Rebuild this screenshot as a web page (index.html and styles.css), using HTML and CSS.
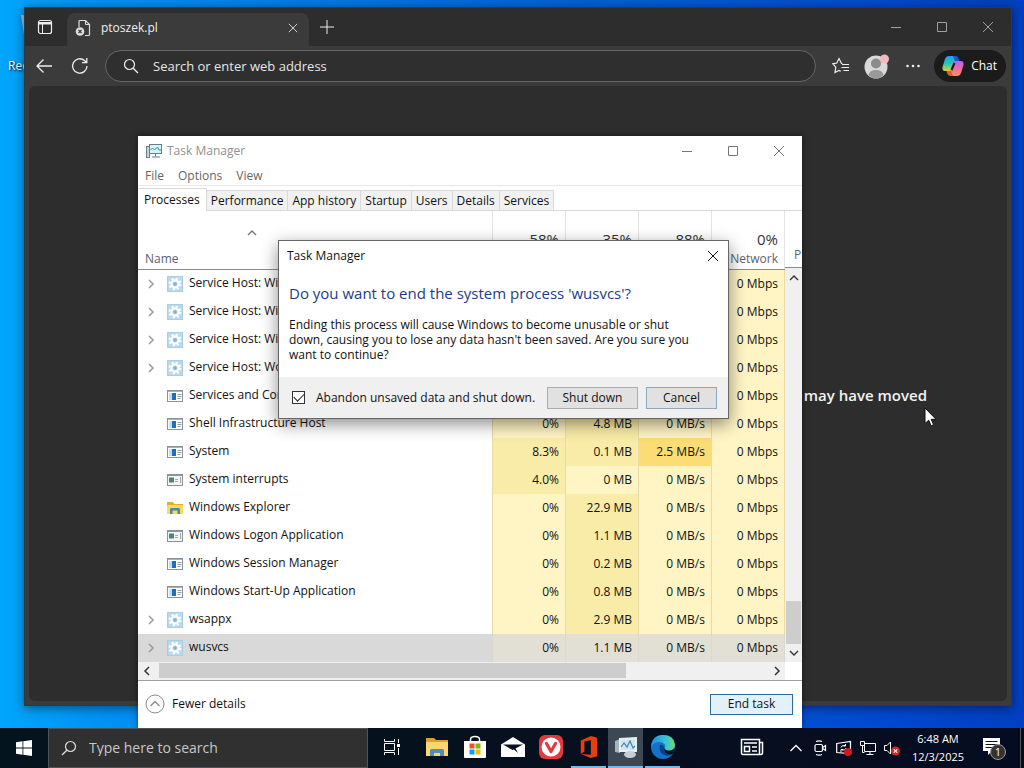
FILE: index.html
```html
<!DOCTYPE html>
<html lang="en">
<head>
<meta charset="utf-8">
<title>Desktop</title>
<link rel="stylesheet" href="styles.css">
</head>
<body>
<svg class="sprite" aria-hidden="true">
  <symbol id="gear" viewBox="0 0 16 16"><rect width="16" height="16" fill="#a9cde3"/><rect x="1" y="1" width="14" height="14" fill="#b9d9ec"/><circle cx="8" cy="8" r="3.6" fill="none" stroke="#fff" stroke-width="2.2"/><circle cx="8" cy="8" r="5.4" fill="none" stroke="#fff" stroke-width="2" stroke-dasharray="2.1 2.14"/><circle cx="8" cy="8" r="1.8" fill="#7fb2d2"/></symbol>
  <symbol id="app" viewBox="0 0 16 16"><rect x=".5" y="2.5" width="15" height="11" fill="#fff" stroke="#8a9299"/><path d="M1 3.5h14" stroke="#a9b2b9"/><rect x="5" y="5" width="4" height="7" fill="#1a6fc0"/><rect x="2" y="5" width="3" height="7" fill="#c7dff3"/><path d="M10.500 6.500h4M10.500 8.500h4M10.500 10.500h3" stroke="#8b98a5"/></symbol>
  <symbol id="appgray" viewBox="0 0 16 16"><rect x=".5" y="2.500" width="15" height="11" fill="#f4f6f6" stroke="#8a9299"/><path d="M1 3.500h14" stroke="#8f989c"/><rect x="2" y="5.500" width="5" height="5" fill="#4f8379"/><path d="M8 7.500h3M8 9.500h3M13.500 5v6" stroke="#a2aaad"/></symbol>
  <symbol id="folder" viewBox="0 0 16 16"><path d="M0 2h6l1.500 2H16v10H0z" fill="#e3ae2c"/><path d="M0 5h16v9H0z" fill="#fbd765"/><path d="M3 14V9.500Q3 8 4.500 8h7Q13 8 13 9.500V14h-2.500v-3.500h-5V14z" fill="#3f8fae"/></symbol>
  <symbol id="tm" viewBox="0 0 16 16"><rect x=".5" y="3.500" width="3" height="11" fill="#c7d3d9" stroke="#6f838d"/><rect x="3.500" y="1.500" width="12" height="9" fill="#d9f1f7" stroke="#64808d"/><path d="M4.500 7l2-2 2 2 3-3 1.500 3h2" fill="none" stroke="#2297b9"/><path d="M9.500 11v2.500M6 14h8" stroke="#64808d"/></symbol>
  <symbol id="close" viewBox="0 0 12 12"><path d="M1 1l10 10M11 1L1 11" fill="none" stroke="currentColor"/></symbol>
  <symbol id="max" viewBox="0 0 12 12"><path d="M1.500 1.500h9v9h-9z" fill="none" stroke="currentColor"/></symbol>
  <symbol id="min" viewBox="0 0 12 12"><path d="M1 6.500h10" stroke="currentColor"/></symbol>
  <symbol id="chev" viewBox="0 0 12 12"><path d="M4 2l4 4-4 4" fill="none" stroke="currentColor" stroke-width="1.500"/></symbol>
  <symbol id="up" viewBox="0 0 12 12"><path d="M2 8l4-4 4 4" fill="none" stroke="currentColor" stroke-width="1.400"/></symbol>
  <symbol id="glass" viewBox="0 0 16 16"><circle cx="6.500" cy="6.500" r="5" fill="none" stroke="currentColor" stroke-width="1.200"/><path d="M10.200 10.200L15 15" stroke="currentColor" stroke-width="1.300"/></symbol>
</svg>

<div class="screen">
  <main class="desktop">
    <div class="bin">
      <svg viewBox="0 0 40 44"><path d="M3 3l34 3-6 36H9z" fill="#a9c6d6"/><path d="M7 7l10 2v28l-6 1z" fill="#7fa3b8"/></svg>
      <span>Rec</span>
    </div>

    <section class="edge">
      <header class="tabbar">
        <button class="ico workspaces" aria-label="Workspaces"><svg viewBox="0 0 16 16"><rect x="1.500" y="1.500" width="13" height="13" rx="2" fill="none" stroke="currentColor" stroke-width="1.200"/><path d="M2 3h12v2.500H2z" fill="currentColor"/><path d="M5.500 5v9" stroke="currentColor"/></svg></button>
        <div class="tab">
          <svg class="fav" viewBox="0 0 16 18"><path d="M4 8V2.500Q4 1.500 5 1.500h5.500L14.500 5.500v10q0 1-1 1H10" fill="none" stroke="#ddd" stroke-width="1.200"/><path d="M10.500 1.500v4h4" fill="none" stroke="#ddd"/><circle cx="5" cy="12.500" r="4.300" fill="#ddd"/><path d="M3.500 11l3 3m0-3l-3 3" stroke="#3b3b3b" stroke-width="1.200"/></svg>
          <span>ptoszek.pl</span>
          <button class="ico small" aria-label="Close tab"><svg viewBox="0 0 12 12"><use href="#close"/></svg></button>
        </div>
        <button class="ico plus" aria-label="New tab"><svg viewBox="0 0 16 16"><path d="M8 1v14M1 8h14" stroke="currentColor"/></svg></button>
        <div class="winbtns">
          <button aria-label="Minimize"><svg viewBox="0 0 12 12"><use href="#min"/></svg></button>
          <button aria-label="Maximize"><svg viewBox="0 0 12 12"><use href="#max"/></svg></button>
          <button aria-label="Close"><svg viewBox="0 0 12 12"><use href="#close"/></svg></button>
        </div>
      </header>
      <div class="toolbar">
        <button class="ico" aria-label="Back"><svg viewBox="0 0 18 18"><path d="M17 9H2M8.500 2.500L2 9l6.500 6.500" fill="none" stroke="currentColor" stroke-width="1.300"/></svg></button>
        <button class="ico" aria-label="Refresh"><svg viewBox="0 0 18 18"><path d="M16 9a7.200 7.200 0 1 1-2.500-5.500L15.500 5.500M15.800 1v4.700H11" fill="none" stroke="currentColor" stroke-width="1.300"/></svg></button>
        <div class="address">
          <svg viewBox="0 0 16 16"><use href="#glass"/></svg>
          <input type="text" aria-label="Address" placeholder="Search or enter web address">
        </div>
        <button class="ico" aria-label="Favorites"><svg viewBox="0 0 18 18"><path d="M10.500 6.500H9.500L7 1.500 4.800 6 .8 6.800l3 3.400-.8 5.300 4-2 1.800.8M10 7.500h7M9.500 10.500H17M11.500 13.500H17" fill="none" stroke="currentColor" stroke-width="1.200"/></svg></button>
        <button class="ico avatar" aria-label="Profile"><svg viewBox="0 0 26 26"><circle cx="12" cy="14" r="11.500" fill="#d9d9d9"/><circle cx="12" cy="10.500" r="5" fill="#8c8c8c"/><path d="M4.500 22.500Q5 17 12 17t7.500 5.500Q16 25.500 12 25.500T4.500 22.500" fill="#9a9a9a"/><circle cx="20.500" cy="6" r="4.500" fill="#f5b8bd"/></svg></button>
        <button class="ico dots" aria-label="More"><svg viewBox="0 0 18 18"><g fill="currentColor"><circle cx="3.500" cy="9" r="1.300"/><circle cx="9" cy="9" r="1.300"/><circle cx="14.500" cy="9" r="1.300"/></g></svg></button>
        <button class="chat">
          <svg viewBox="0 0 24 24">
            <defs>
              <linearGradient id="ga" x2="0" y2="1"><stop stop-color="#1fa0f5"/><stop offset=".5" stop-color="#27c5b0"/><stop offset="1" stop-color="#d8d33b"/></linearGradient>
              <linearGradient id="gb" x2="0" y2="1"><stop stop-color="#b264f0"/><stop offset=".5" stop-color="#f06aa8"/><stop offset="1" stop-color="#ff9352"/></linearGradient>
            </defs>
            <path d="M8 2h6q2 0 1.500 2L12.500 14q-.8 3-3.500 3H4Q1 17 1.500 13L4 5q1-3 4-3z" fill="url(#ga)"/>
            <path d="M12 2h3q2 0 3 3l.5 2H14z" fill="#1b55d0"/>
            <path d="M16 22h-6q-2 0-1.500-2l3-10q.8-3 3.500-3h5q3 0 2.500 4L20 19q-1 3-4 3z" fill="url(#gb)"/>
            <path d="M12 22H9q-2 0-3-3l-.5-2H10z" fill="#f0533c"/>
            <path d="M13.500 9l-3 7" stroke="#1b1b1b" stroke-width="2"/>
          </svg>
          Chat
        </button>
      </div>
      <div class="page"><p>may have moved</p></div>
    </section>

    <section class="taskmgr">
      <header class="tm-title">
        <svg viewBox="0 0 16 16"><use href="#tm"/></svg>
        <h1>Task Manager</h1>
        <div class="winbtns">
          <button aria-label="Minimize"><svg viewBox="0 0 12 12"><use href="#min"/></svg></button>
          <button aria-label="Maximize"><svg viewBox="0 0 12 12"><use href="#max"/></svg></button>
          <button aria-label="Close"><svg viewBox="0 0 12 12"><use href="#close"/></svg></button>
        </div>
      </header>
      <nav class="menu"><button>File</button><button>Options</button><button>View</button></nav>
      <div class="tabs" role="tablist">
        <button role="tab" class="on">Processes</button><button role="tab">Performance</button><button role="tab">App history</button><button role="tab">Startup</button><button role="tab">Users</button><button role="tab">Details</button><button role="tab">Services</button>
      </div>
      <div class="grid">
        <table>
          <colgroup><col><col class="c-cpu"><col class="c-mem"><col class="c-disk"><col class="c-net"></colgroup>
          <thead>
            <tr>
              <th class="name"><svg class="sort" viewBox="0 0 12 12"><use href="#up"/></svg>Name</th>
              <th><b>58%</b>CPU</th><th><b>35%</b>Memory</th><th><b>88%</b>Disk</th><th><b>0%</b>Network</th>
            </tr>
          </thead>
          <tbody>
            <tr><td class="exp"><svg class="tw"><use href="#chev"/></svg><svg><use href="#gear"/></svg>Service Host: Win</td><td>0%</td><td class="m">1.1 MB</td><td>0 MB/s</td><td>0 Mbps</td></tr>
            <tr><td class="exp"><svg class="tw"><use href="#chev"/></svg><svg><use href="#gear"/></svg>Service Host: Win</td><td>0%</td><td class="m">1.1 MB</td><td>0 MB/s</td><td>0 Mbps</td></tr>
            <tr><td class="exp"><svg class="tw"><use href="#chev"/></svg><svg><use href="#gear"/></svg>Service Host: Win</td><td>0%</td><td class="m">1.1 MB</td><td>0 MB/s</td><td>0 Mbps</td></tr>
            <tr><td class="exp"><svg class="tw"><use href="#chev"/></svg><svg><use href="#gear"/></svg>Service Host: Wo</td><td>0%</td><td class="m">1.1 MB</td><td>0 MB/s</td><td>0 Mbps</td></tr>
            <tr><td><svg><use href="#app"/></svg>Services and Con</td><td>0%</td><td class="m">1.1 MB</td><td>0 MB/s</td><td>0 Mbps</td></tr>
            <tr><td><svg><use href="#app"/></svg>Shell Infrastructure Host</td><td>0%</td><td class="m">4.8 MB</td><td>0 MB/s</td><td>0 Mbps</td></tr>
            <tr><td><svg><use href="#app"/></svg>System</td><td class="m">8.3%</td><td class="m">0.1 MB</td><td class="h">2.5 MB/s</td><td>0 Mbps</td></tr>
            <tr><td><svg><use href="#appgray"/></svg>System interrupts</td><td class="m">4.0%</td><td>0 MB</td><td>0 MB/s</td><td>0 Mbps</td></tr>
            <tr><td><svg><use href="#folder"/></svg>Windows Explorer</td><td>0%</td><td class="m">22.9 MB</td><td>0 MB/s</td><td>0 Mbps</td></tr>
            <tr><td><svg><use href="#appgray"/></svg>Windows Logon Application</td><td>0%</td><td class="m">1.1 MB</td><td>0 MB/s</td><td>0 Mbps</td></tr>
            <tr><td><svg><use href="#app"/></svg>Windows Session Manager</td><td>0%</td><td class="m">0.2 MB</td><td>0 MB/s</td><td>0 Mbps</td></tr>
            <tr><td><svg><use href="#app"/></svg>Windows Start-Up Application</td><td>0%</td><td class="m">0.8 MB</td><td>0 MB/s</td><td>0 Mbps</td></tr>
            <tr><td class="exp"><svg class="tw"><use href="#chev"/></svg><svg><use href="#gear"/></svg>wsappx</td><td>0%</td><td class="m">2.9 MB</td><td>0 MB/s</td><td>0 Mbps</td></tr>
            <tr class="sel"><td class="exp"><svg class="tw"><use href="#chev"/></svg><svg><use href="#gear"/></svg>wusvcs</td><td>0%</td><td>1.1 MB</td><td>0 MB/s</td><td>0 Mbps</td></tr>
          </tbody>
        </table>
        <div class="side">
          <div class="side-head">P</div>
          <div class="vscroll"><svg viewBox="0 0 12 12"><use href="#up"/></svg><i></i><svg class="down" viewBox="0 0 12 12"><use href="#up"/></svg></div>
        </div>
      </div>
      <div class="hscroll"><svg class="left" viewBox="0 0 12 12"><use href="#chev"/></svg><div class="track"><i></i></div><svg viewBox="0 0 12 12"><use href="#chev"/></svg></div>
      <footer>
        <button class="fewer"><svg viewBox="0 0 20 20"><circle cx="10" cy="10" r="9" fill="none" stroke="#8a8a8a"/><path d="M5.500 12L10 7.500l4.500 4.500" fill="none" stroke="#8a8a8a" stroke-width="1.300"/></svg>Fewer details</button>
        <button class="end">End task</button>
      </footer>
    </section>

    <section class="dialog" role="dialog" aria-labelledby="ask">
      <header><span>Task Manager</span><button aria-label="Close"><svg viewBox="0 0 12 12"><use href="#close"/></svg></button></header>
      <div class="body">
        <h2 id="ask">Do you want to end the system process 'wusvcs'?</h2>
        <p>Ending this process will cause Windows to become unusable or shut down, causing you to lose any data hasn't been saved. Are you sure you want to continue?</p>
      </div>
      <footer>
        <input type="checkbox" id="abandon" checked><label for="abandon">Abandon unsaved data and shut down.</label>
        <button class="shut">Shut down</button><button class="cancel">Cancel</button>
      </footer>
    </section>

    <svg class="cursor" viewBox="0 0 13 20"><path d="M1 1v15.500l3.700-3.300 2.400 5.600 2.500-1.100-2.400-5.400H12z" fill="#fff" stroke="#111"/></svg>
  </main>

  <footer class="taskbar">
    <button class="start" aria-label="Start"><svg viewBox="0 0 16 16"><path d="M0 2.200l6.500-.9v6.200H0zM7.300 1.200L16 0v7.500H7.300zM0 8.400h6.500v6.300L0 13.800zM7.300 8.400H16V16l-8.700-1.200z" fill="#fff"/></svg></button>
    <label class="search"><svg viewBox="0 0 16 16"><use href="#glass"/></svg><input type="text" aria-label="Search" placeholder="Type here to search"></label>
    <button class="tb view" aria-label="Task View"><svg viewBox="0 0 18 18"><path d="M1.500 1v2.500h10V1M1.500 17v-2.500h10V17M1.500 5.500h10v7h-10zM15.500 1v4M15.500 10v7" fill="none" stroke="#fff"/><path d="M14 6h3v3h-3z" fill="#fff"/></svg></button>
    <div class="apps">
      <button class="tb" aria-label="File Explorer"><svg viewBox="0 0 24 24"><path d="M1 3h8l2 2h12v16H1z" fill="#dba32a"/><path d="M1 7h22v14H1z" fill="#fcd770"/><path d="M5 21v-5.500Q5 14 6.500 14h11q1.500 0 1.500 1.500V21h-4v-3H9v3z" fill="#4d8fb5"/></svg></button>
      <button class="tb" aria-label="Store"><svg viewBox="0 0 24 24"><path d="M7.500 7V4.500q0-3 4.500-3t4.500 3V7" fill="none" stroke="#fff" stroke-width="1.500"/><path d="M1 6h22v16q0 1-1 1H2q-1 0-1-1z" fill="#fff"/><path d="M6.500 8.500h5v5h-5z" fill="#f25022"/><path d="M12.500 8.500h5v5h-5z" fill="#7fba00"/><path d="M6.500 14.500h5v5h-5z" fill="#00a4ef"/><path d="M12.500 14.500h5v5h-5z" fill="#ffb900"/></svg></button>
      <button class="tb" aria-label="Mail"><svg viewBox="0 0 24 24"><path d="M0 9.500L12 2l12 7.500V22H0z" fill="#fff"/><path d="M2 9.500h20L11.500 15z" fill="#06131f"/><path d="M10 12l7 6-3.500-6.500z" fill="#06131f"/></svg></button>
      <button class="tb" aria-label="Vivaldi"><svg viewBox="0 0 24 24"><rect width="24" height="24" rx="6" fill="#e5393f"/><circle cx="12" cy="12" r="9.500" fill="#fff"/><path d="M7.500 8.500l4.500 8 4.500-8" fill="none" stroke="#e5393f" stroke-width="3.200" stroke-linecap="round" stroke-linejoin="round"/></svg></button>
      <button class="tb open" aria-label="Office"><svg viewBox="0 0 24 24"><path d="M3 5L14 0l7 2v20l-7 2L3 19.500l11 1V4.500L7 6v11l-4 2.500z" fill="#e2400c"/></svg></button>
      <button class="tb open active" aria-label="Task Manager"><svg viewBox="0 0 24 24"><path d="M1 6l5-2v14l-5-1z" fill="#a7b3bb"/><path d="M5 3l18-1v15H5z" fill="#e9eef1"/><path d="M7 5l14-.500V15H7z" fill="#d2e4f0"/><path d="M7 12l3-4 3 4 3-6 3 7 2-2" fill="none" stroke="#3b84bd" stroke-width="1.200"/><ellipse cx="16" cy="19.500" rx="6" ry="3.500" fill="#c5ced4"/></svg></button>
      <button class="tb open" aria-label="Edge"><svg viewBox="0 0 24 24"><defs><linearGradient id="ge"><stop stop-color="#1f8fe0"/><stop offset=".6" stop-color="#35c1d8"/><stop offset="1" stop-color="#6fdc6a"/></linearGradient></defs><circle cx="12" cy="12" r="12" fill="#1272cc"/><path d="M0 12Q1 0 12 0q11 0 12 9.500 0 5.500-6 6-4 0-4.500-2.500 1.500-1.500 0-4Q11 6.500 7 7 2 8 0 12z" fill="url(#ge)"/><path d="M9 10Q7 17 13 20q5 2 9-1.500-4 1-7-1-3-2-1.500-5Q12 9 9 10z" fill="#0c3f85"/><path d="M13.500 13q1 3 5 2.700 3 0 5-2.700v4l-2 2q-5 1-7.500-2-1.500-2-.5-4z" fill="#06131f"/></svg></button>
    </div>
    <button class="tb news" aria-label="News"><svg viewBox="0 0 24 18"><path d="M1.500 1.500h18v15H3q-1.500 0-1.500-1.500zM19.500 4.500h3V15q0 1.500-1.500 1.500h-2" fill="none" stroke="#fff" stroke-width="1.500"/><path d="M4 5h13M12 9h5M12 13h5M4.500 8.500h5v5h-5z" fill="none" stroke="#fff" stroke-width="1.500"/></svg></button>
    <div class="tray">
      <svg viewBox="0 0 16 16"><path d="M2.500 11L8 5.500l5.500 5.500" fill="none" stroke="#fff" stroke-width="1.300"/></svg>
      <svg viewBox="0 0 16 16"><rect x="3" y="4.500" width="7.500" height="7" rx="1.500" fill="none" stroke="#fff" stroke-width="1.200"/><path d="M10.500 7.500l3-2v5l-3-2M4 1.500Q7 .3 10 1.500M4 14.500q3 1.200 6 0" fill="none" stroke="#fff" stroke-width="1.200"/></svg>
      <svg viewBox="0 0 16 16"><path d="M.7 3.500L14.500 1.500v12L.7 12.500z" fill="none" stroke="#fff" stroke-width="1.200"/><path d="M5 7.500q.5-2.500 4-2M9.500 4v2H7.500M10 8q-.5 2.500-4 2M5 12V9.500h2" fill="none" stroke="#fff"/><circle cx="12" cy="12" r="4" fill="#d5161c"/></svg>
      <svg viewBox="0 0 16 16"><path d="M4.500 3.500h11v8h-11zM10 11.500v3M6.500 14.500h7M.5 1.500h4v4h-4zM2.500 5.500v7h2" fill="none" stroke="#fff"/></svg>
      <svg viewBox="0 0 16 16"><path d="M.5 5.500h2.500L6.500 2v12L3 10.500H.5z" fill="none" stroke="#fff"/><circle cx="11.500" cy="11" r="4.500" fill="#d9232b"/><path d="M9.800 9.300l3.400 3.400m0-3.400l-3.400 3.400" stroke="#fff" stroke-width="1.200"/></svg>
    </div>
    <time>6:48 AM<br>12/3/2025</time>
    <button class="note" aria-label="Notifications"><svg viewBox="0 0 24 24"><path d="M1 2h17v13h-8l-4 4v-4H1z" fill="#fff"/><path d="M3.500 5.500h12M3.500 8.500h12M3.500 11.500h8" stroke="#06131f"/></svg><span>1</span></button>
    <i class="peek"></i>
  </footer>
</div>
</body>
</html>
```
FILE: styles.css
```css
* { box-sizing: border-box; }
body { margin: 0; font: 12px/16px "Open Sans", "Noto Sans", sans-serif; color: #111; }
button, input { font: inherit; color: inherit; }
button { padding: 0; border: 0; background: none; }
svg { display: block; flex: none; }
h1, h2, p { margin: 0; font-weight: 400; }
.sprite { position: absolute; width: 0; height: 0; }

.screen { display: flex; flex-direction: column; min-height: 100vh; overflow: hidden; }
.desktop { position: relative; flex: 1; background: linear-gradient(90deg, #00a6fb 0, #0092f5 10%, #0067dc 50%, #0048cf 88%, #003fc0 100%); }

.bin { position: absolute; left: 8px; top: 12px; color: #fff; text-shadow: 1px 1px 2px #000; }
.bin svg { width: 40px; height: 44px; margin-left: 10px; }
.bin span { display: block; margin-top: 2px; }

/* Browser window */
.edge { position: absolute; left: 24px; right: 12px; top: 7px; bottom: 22px; display: flex; flex-direction: column; background: #3b3b3b; color: #eee; border: 1px solid #2f3a40; box-shadow: 0 2px 10px rgba(0, 0, 0, .5); }
.tabbar { display: flex; align-items: center; height: 38px; background: #2d2d2d; }
.ico { display: grid; place-items: center; width: 36px; height: 32px; }
.ico svg { width: 18px; height: 18px; }
.workspaces { width: 40px; }
.workspaces svg, .plus svg { width: 16px; height: 16px; }
.tab { display: flex; align-items: center; align-self: stretch; gap: 10px; width: 242px; margin: 5px 0 0 2px; padding: 0 4px 4px 8px; border-radius: 8px 8px 0 0; background: #3b3b3b; }
.tab span { flex: 1; }
.fav { width: 16px; height: 18px; }
.small { width: 24px; }
.small svg { width: 10px; height: 10px; }
.winbtns { display: flex; margin-left: auto; color: #a0a0a0; }
.winbtns button { display: grid; place-items: center; width: 46px; height: 30px; }
.winbtns svg { width: 12px; height: 12px; }
.toolbar { display: flex; align-items: center; height: 40px; padding: 0 5px 0 1px; }
.address { flex: 1; display: flex; align-items: center; gap: 14px; height: 32px; margin: 0 7px; padding: 0 17px; border: 1px solid #666; border-radius: 16px; background: #2f2f2f; }
.address svg { width: 16px; height: 16px; }
.address input { flex: 1; min-width: 0; border: 0; padding: 0; background: none; font-size: 13px; outline: 0; }
.address input::placeholder { color: #e6e6e6; }
.avatar svg { width: 26px; height: 26px; }
.chat { display: flex; align-items: center; gap: 6px; height: 32px; margin-left: 3px; padding: 0 9px 0 7px; border-radius: 16px; background: #1b1b1b; color: #fff; }
.chat svg { width: 24px; height: 24px; }
.page { flex: 1; margin: 0 4px 4px; border-radius: 6px; background: #2d2d2d; color: #f2f2f2; }
.page p { padding: 299px 80px 0 0; text-align: right; font-size: 15px; line-height: 20px; font-weight: 600; }

/* Task Manager */
.taskmgr { position: absolute; left: 138px; top: 136px; width: 664px; background: #fff; box-shadow: 0 0 6px rgba(0, 0, 0, .5); }
.tm-title { display: flex; align-items: center; height: 30px; padding-left: 8px; color: #8f8f8f; }
.tm-title > svg { width: 16px; height: 16px; }
.tm-title h1 { margin-left: 5px; font-size: 12px; }
.tm-title button { color: #777; }
.menu { display: flex; gap: 14px; height: 20px; padding: 0 7px; border-bottom: 1px solid #e8e8e8; color: #666; }
.menu button { line-height: 18px; }
.tabs { display: flex; align-items: flex-end; height: 25px; border-bottom: 1px solid #d9d9d9; }
.tabs button { height: 20px; padding: 0 4px; border: 1px solid #d9d9d9; border-width: 1px 1px 0 0; background: #f1f1f1; white-space: nowrap; line-height: 18px; }
.tabs .on { height: 23px; margin-bottom: -1px; padding: 0 6px; background: #fff; }
.grid { display: flex; }
table { flex: 1; table-layout: fixed; border-collapse: collapse; }
.c-cpu, .c-disk { width: 73px; }
.c-mem, .c-net { width: 73px; }
th { height: 58px; padding: 16px 6px 2px 0; border-right: 1px solid #e3e3e3; border-bottom: 1px solid #8c8c8c; text-align: right; vertical-align: bottom; font-weight: 400; color: #5b6470; }
th b { display: block; margin-bottom: 2px; font-size: 15px; line-height: 20px; font-weight: 400; color: #333; }
.name { padding-left: 7px; text-align: left; }
.sort { width: 12px; height: 12px; margin: 0 0 12px 101px; color: #777; }
td { height: 28px; padding: 0 6px 0 0; border-right: 1px solid #e8dca4; background: #fff4c4; text-align: right; white-space: nowrap; }
td.m { background: #f9eca8; }
td.h { background: #fcdc75; }
td:first-child { padding-left: 29px; background: #fff; text-align: left; }
td:first-child.exp { padding-left: 7px; }
td svg { display: inline-block; width: 16px; height: 16px; margin-right: 6px; vertical-align: middle; }
td .tw { width: 12px; height: 12px; margin-right: 10px; color: #999; }
.sel td { background: #e2e0d4; border-color: #d9d9d0; }
.sel td:first-child { background: #d9d9d9; }
.side { display: flex; flex-direction: column; width: 17px; }
.side-head { height: 57px; padding: 36px 0 0 9px; border-bottom: 1px solid #8c8c8c; color: #5b6470; overflow: hidden; }
.vscroll { flex: 1; display: flex; flex-direction: column; align-items: center; padding: 4px 0 3px; background: #f0f0f0; }
.vscroll svg, .hscroll svg { width: 12px; height: 12px; color: #333; }
.vscroll i { width: 15px; height: 43px; margin: auto 0 3px; background: #cdcdcd; }
.down { transform: rotate(180deg); }
.hscroll { display: flex; align-items: center; gap: 6px; height: 18px; margin-right: 17px; padding: 0 2px 0 3px; background: #f0f0f0; }
.track { flex: 1; }
.track i { display: block; width: 77%; height: 15px; background: #cdcdcd; }
.left { transform: rotate(180deg); }
.taskmgr footer { display: flex; align-items: center; justify-content: space-between; height: 48px; padding: 0 9px 0 7px; border-top: 1px solid #a0a0a0; }
.fewer { display: flex; align-items: center; gap: 7px; }
.fewer svg { width: 20px; height: 20px; }
.end { width: 83px; height: 21px; border: 1px solid #2c6a9e; background: #e3f1fb; }

/* Confirmation */
.dialog { position: absolute; left: 278px; top: 240px; width: 451px; border: 1px solid #666; background: #fff; box-shadow: 0 5px 16px rgba(0, 0, 0, .45); }
.dialog header { display: flex; align-items: center; justify-content: space-between; height: 30px; padding: 0 9px 0 8px; }
.dialog header svg { width: 12px; height: 12px; }
.body { padding: 12px 10px 15px; }
.body h2 { font-size: 15px; line-height: 20px; color: #1b3c8c; }
.body p { max-width: 410px; margin-top: 14px; line-height: 15px; }
.dialog footer { display: flex; align-items: center; height: 41px; padding: 0 11px 0 13px; background: #f0f0f0; }
.dialog input { appearance: none; display: grid; place-items: center; width: 13px; height: 13px; margin: 0 11px 0 0; border: 1px solid #333; background: #fff; }
.dialog input:checked::after { content: ""; width: 9px; height: 5px; margin-bottom: 3px; border: solid #222; border-width: 0 0 1px 1px; transform: rotate(-45deg); }
.dialog label { flex: 1; white-space: nowrap; }
.dialog footer button { height: 22px; margin-left: 8px; border: 1px solid #adadad; background: #e1e1e1; }
.dialog .shut { width: 91px; }
.dialog .cancel { width: 71px; border-color: #8aa9c0; }
.cursor { position: absolute; left: 924px; top: 407px; width: 13px; height: 20px; }

/* Taskbar */
.taskbar { position: relative; display: flex; align-items: center; height: 40px; background: linear-gradient(90deg, #04141f, #06101e 50%, #060c20); color: #fff; }
.start { display: grid; place-items: center; width: 48px; height: 40px; }
.start svg { width: 16px; height: 16px; }
.search { display: flex; align-items: center; gap: 12px; width: 320px; height: 40px; padding: 0 12px; border: 1px solid #4b555b; background: #303030; }
.search svg { width: 16px; height: 16px; transform: scaleX(-1); color: #ddd; }
.search input { flex: 1; min-width: 0; border: 0; padding: 0; background: none; font-size: 14px; outline: 0; }
.search input::placeholder { color: #c8c8c8; }
.tb { display: grid; place-items: center; width: 36px; height: 40px; border-bottom: 2px solid transparent; }
.tb svg { width: 24px; height: 24px; }
.view { width: 48px; }
.view svg { width: 18px; height: 18px; }
.apps { display: flex; gap: 2px; margin-left: 3px; }
.apps .tb:nth-child(5) svg { width: 22px; }
.open { border-color: #76b9ed; width: 35px; }
.active { background: #3c4854; }
.news { margin-left: auto; }
.news svg { width: 24px; height: 18px; }
.tray { display: flex; gap: 8px; margin: 0 10px 0 18px; }
.tray svg { width: 16px; height: 16px; }
time { width: 56px; text-align: center; line-height: 18px; font-size: 11px; }
.note { position: relative; width: 24px; height: 24px; margin: 0 14px 0 16px; }
.note svg { width: 24px; height: 24px; }
.note span { position: absolute; left: 8px; top: 8px; width: 16px; height: 16px; border: 1px solid #999; border-radius: 50%; background: #333; font-size: 11px; line-height: 14px; }
.peek { width: 4px; height: 40px; border-left: 1px solid #555; }
```
